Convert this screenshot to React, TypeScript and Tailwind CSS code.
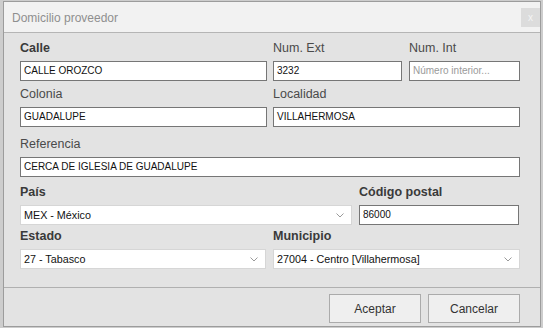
import React from "react";

const F = { fontFamily: '"Liberation Sans", Arial, sans-serif' };

function Label({ text, bold, className = "" }: { text: string; bold?: boolean; className?: string }) {
  return (
    <div
      className={`h-[16px] leading-[16px] text-[12.5px] ${bold ? "font-bold text-[#3a3a3a]" : "text-[#4a4a4a]"} ${className}`}
    >
      {text}
    </div>
  );
}

function Input({ value, placeholder, w }: { value?: string; placeholder?: string; w: string }) {
  return (
    <div
      className={`${w} h-[20px] mt-[5px] bg-white border border-[#767676] pl-[3px] flex items-center text-[10px] leading-none overflow-hidden whitespace-nowrap ${
        value ? "text-[#111]" : "text-[#9a9a9a]"
      }`}
    >
      {value || placeholder}
    </div>
  );
}

function Select({ value, w }: { value: string; w: string }) {
  return (
    <div
      className={`${w} h-[20px] mt-[5px] bg-white border border-[#d6d6d6] pl-[3px] pr-[7px] flex items-center justify-between text-[10.75px] leading-none text-[#111] whitespace-nowrap`}
    >
      <span>{value}</span>
      <svg width="8" height="5" viewBox="0 0 8 5">
        <path d="M0.5 0.5 L4 4 L7.5 0.5" fill="none" stroke="#9a9a9a" strokeWidth="1" />
      </svg>
    </div>
  );
}

export default function App() {
  return (
    <div className="w-[543px] h-[328px] bg-[#cdcdcd] pl-[3px] pt-[1px] overflow-hidden" style={F}>
      <div className="w-[538px] h-[326px] border border-[#9c9c9c] flex flex-col">
        <div className="h-[31px] bg-[#f2f2f2] border-b border-[#b5b5b5] flex items-start justify-between pl-[8px]">
          <div className="text-[12px] text-[#8f8f8f] mt-[8px] leading-[16px]">Domicilio proveedor</div>
          <div className="w-[19px] h-[19px] mt-[6px] bg-[#dcdcdc] text-[#f4f4f4] text-[10px] flex items-center justify-center leading-none">
            x
          </div>
        </div>
        <div className="flex-1 bg-[#e3e3e3] pl-[16px] pt-[7px]">
          <div className="flex gap-[6px]">
            <div>
              <Label text="Calle" bold />
              <Input value="CALLE OROZCO" w="w-[247px]" />
            </div>
            <div>
              <Label text="Num. Ext" />
              <Input value="3232" w="w-[129px]" />
            </div>
            <div className="ml-[1px]">
              <Label text="Num. Int" />
              <Input placeholder="Número interior..." w="w-[111px]" />
            </div>
          </div>
          <div className="flex gap-[6px] mt-[5px]">
            <div>
              <Label text="Colonia" />
              <Input value="GUADALUPE" w="w-[247px]" />
            </div>
            <div>
              <Label text="Localidad" />
              <Input value="VILLAHERMOSA" w="w-[247px]" />
            </div>
          </div>
          <div className="mt-[9px]">
            <Label text="Referencia" />
            <Input value="CERCA DE IGLESIA DE GUADALUPE" w="w-[500px]" />
          </div>
          <div className="flex gap-[7px] mt-[7px]">
            <div>
              <Label text="País" bold />
              <Select value="MEX - México" w="w-[332px]" />
            </div>
            <div>
              <Label text="Código postal" bold />
              <Input value="86000" w="w-[160px]" />
            </div>
          </div>
          <div className="flex gap-[7px] mt-[3px]">
            <div>
              <Label text="Estado" bold />
              <Select value="27 - Tabasco" w="w-[246px]" />
            </div>
            <div>
              <Label text="Municipio" bold />
              <Select value="27004 - Centro [Villahermosa]" w="w-[247px]" />
            </div>
          </div>
        </div>
        <div className="h-[39px] bg-[#e3e3e3] border-t border-[#b0b0b0] flex justify-end items-start gap-[7px] pr-[20px] pt-[6px]">
          <button className="w-[92px] h-[29px] bg-[#efefef] border border-[#ababab] text-[12px] text-[#333]">
            Aceptar
          </button>
          <button className="w-[92px] h-[29px] bg-[#efefef] border border-[#ababab] text-[12px] text-[#333]">
            Cancelar
          </button>
        </div>
      </div>
    </div>
  );
}
